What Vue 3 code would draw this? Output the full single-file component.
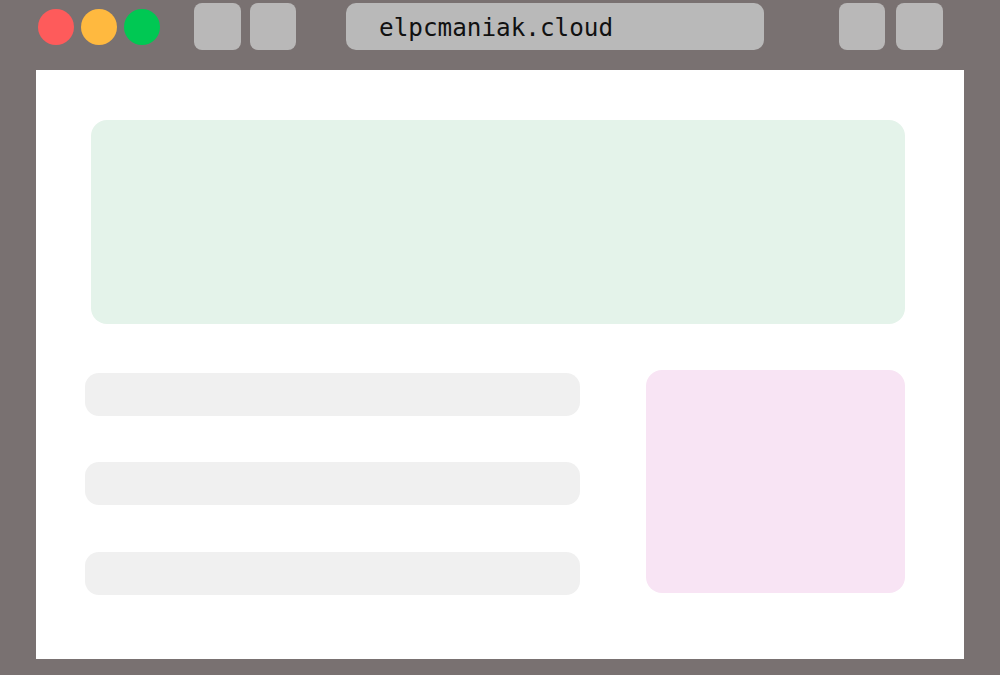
<template>
  <div class="browser">
    <!-- Toolbar -->
    <div class="toolbar">
      <div class="dots">
        <span class="dot red"></span>
        <span class="dot yellow"></span>
        <span class="dot green"></span>
      </div>
      <div class="nav">
        <span class="btn"></span>
        <span class="btn"></span>
      </div>
      <div class="address">{{ url }}</div>
      <div class="actions">
        <span class="btn"></span>
        <span class="btn"></span>
      </div>
    </div>

    <!-- Page -->
    <div class="page">
      <div class="hero"></div>
      <div class="row">
        <div class="lines">
          <div class="line" v-for="n in 3" :key="n"></div>
        </div>
        <div class="side"></div>
      </div>
    </div>
  </div>
</template>

<script setup>
const url = 'elpcmaniak.cloud';
</script>

<style>
html, body {
  margin: 0;
  background: #797171;
}
</style>

<style scoped>
.browser {
  width: 1000px;
  height: 675px;
  box-sizing: border-box;
  padding: 0 36px 16px;
  display: flex;
  flex-direction: column;
  background: #797171;
}

.toolbar {
  height: 69.5px;
  flex: none;
  box-sizing: border-box;
  padding: 3px 21.3px 0 2px;
  display: flex;
  align-items: flex-start;
}

.dots {
  display: flex;
  gap: 7px;
  margin-top: 6px;
}

.dot {
  width: 36px;
  height: 36px;
  border-radius: 50%;
}

.red { background: #fe5b5b; }
.yellow { background: #ffb93f; }
.green { background: #00c853; }

.nav, .actions {
  display: flex;
  gap: 9px;
}

.nav { margin-left: 34px; }
.actions { margin-left: auto; gap: 11px; }

.btn {
  width: 46.5px;
  height: 47px;
  border-radius: 8px;
  background: #b9b8b8;
}

.address {
  width: 418px;
  height: 47px;
  margin-left: 50px;
  box-sizing: border-box;
  padding-left: 33px;
  border-radius: 10px;
  background: #b9b9b9;
  color: #111;
  font-family: "DejaVu Sans Mono", monospace;
  font-size: 24.3px;
  line-height: 50px;
}

.page {
  flex: 1;
  box-sizing: border-box;
  padding: 50.5px 59px 0 49px;
  background: #fff;
}

.hero {
  height: 203.5px;
  margin-left: 5.5px;
  border-radius: 16px;
  background: #e4f3ea;
}

.row {
  margin-top: 46.5px;
  display: flex;
  justify-content: space-between;
}

.lines {
  width: 495px;
  padding-top: 2.8px;
  display: flex;
  flex-direction: column;
  gap: 46.5px;
}

.line {
  height: 43px;
  border-radius: 14px;
  background: #f0f0f0;
}

.side {
  width: 259.5px;
  height: 223px;
  border-radius: 16px;
  background: #f8e4f4;
}
</style>
